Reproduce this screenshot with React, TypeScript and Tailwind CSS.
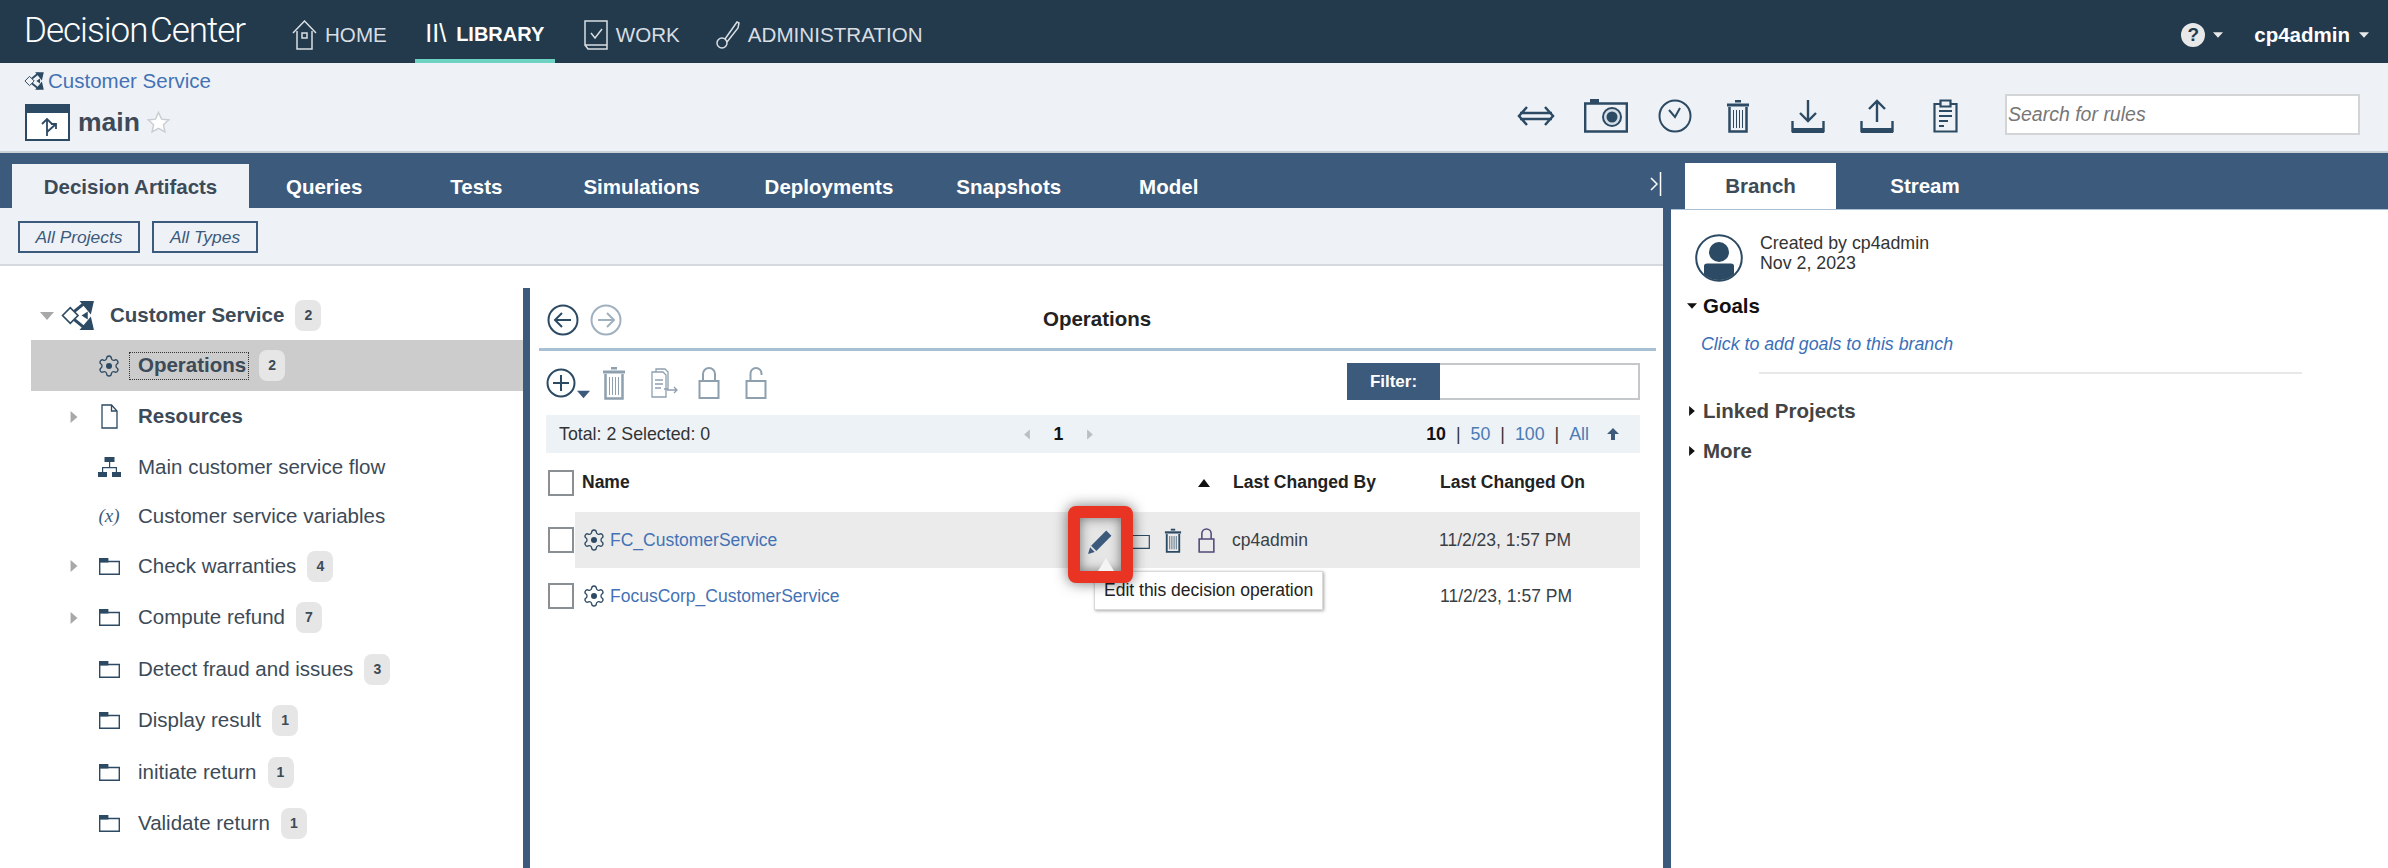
const NAVY = '#2c4a63';

function Gear({ className = 'w-[24px] h-[24px]' }: { className?: string }) {
  return (
    <svg viewBox="0 0 24 24" className={className} fill="none" stroke={NAVY} strokeWidth="1.3">
      <path d="M9.671 4.136a2.34 2.34 0 0 1 4.659 0 2.34 2.34 0 0 0 3.319 1.915 2.34 2.34 0 0 1 2.33 4.033 2.34 2.34 0 0 0 0 3.831 2.34 2.34 0 0 1-2.33 4.033 2.34 2.34 0 0 0-3.319 1.915 2.34 2.34 0 0 1-4.659 0 2.34 2.34 0 0 0-3.32-1.915 2.34 2.34 0 0 1-2.33-4.033 2.34 2.34 0 0 0 0-3.831A2.34 2.34 0 0 1 6.35 6.051a2.34 2.34 0 0 0 3.319-1.915" />
      <circle cx="12" cy="12" r="3" fill={NAVY} stroke="none" />
    </svg>
  );
}

function ProjectIcon({ className }: { className: string }) {
  return (
    <svg viewBox="0 0 34 32" className={className} fill="none" stroke={NAVY}>
      <path d="M1.500 16 9 8.500 16.500 16 9 23.500z" strokeWidth="1.6" />
      <path d="M13 12 24 3M13 20l11 9" strokeWidth="3" />
      <path d="M18 2h14l-3 13zM18 30h14l-3-13z" fill={NAVY} stroke="none" />
      <path d="M20 16l6-4v8z" fill={NAVY} stroke="none" />
    </svg>
  );
}

function Folder() {
  return (
    <svg viewBox="0 0 21 17" className="w-[21px] h-[17px]" fill="none" stroke={NAVY} strokeWidth="1.4">
      <path d="M.7 3.500h19.600v12.800H.7z" />
      <path d="M.7 .7h8v3H.7z" fill={NAVY} />
    </svg>
  );
}

function Trash({ className, color = NAVY }: { className: string; color?: string }) {
  return (
    <svg viewBox="0 0 24 34" className={className} fill="none" stroke={color}>
      <path d="M9 1h6v2.500H9z" fill={color} stroke="none" />
      <path d="M1 4.500h22v3H1z" fill={color} stroke="none" />
      <path d="M3.500 8v24.500h17V8" strokeWidth="2.500" />
      <path d="M7.500 11v18M10.500 11v18M13.500 11v18M16.500 11v18" strokeWidth="1" />
    </svg>
  );
}

function Lock({ className, color, open = false }: { className: string; color: string; open?: boolean }) {
  return (
    <svg viewBox="0 0 22 32" className={className} fill="none" stroke={color} strokeWidth="2">
      <path d="M1.500 14h19v17h-19z" />
      <path d={open ? 'M5.500 14V6.500a5.500 5.500 0 0 1 11 0V8' : 'M5 14V7a6 6 0 0 1 12 0v7'} />
    </svg>
  );
}

function Check({ className = '' }: { className?: string }) {
  return <span className={`block w-[26px] h-[26px] border-2 border-[#8a8f94] bg-white shrink-0 ${className}`} />;
}

function Count({ n }: { n: number }) {
  return (
    <span className="ml-[11px] flex items-center justify-center w-[26px] h-[31px] rounded-[8px] bg-[#e6e6e6] text-[14px] font-bold text-[#3d4a57]">
      {n}
    </span>
  );
}

function Caret({ open = false, color = '#a8a8a8', size = 'w-[14px] h-[14px]' }: { open?: boolean; color?: string; size?: string }) {
  return (
    <svg viewBox="0 0 14 14" className={size} fill={color}>
      <path d={open ? 'M0 3h14L7 11z' : 'M3 0l8 7-8 7z'} />
    </svg>
  );
}

function Tree() {
  const rows = [
    { h: 'h-[51px]', label: 'Operations', n: 2, selected: true, bold: true, icon: <Gear /> },
    { h: 'h-[51px]', label: 'Resources', bold: true, caret: true, icon: (
      <svg viewBox="0 0 17 25" className="w-[17px] h-[25px]" fill="none" stroke={NAVY} strokeWidth="1.3">
        <path d="M1 1h9.500l5.500 6v17H1zM10.500 1v6H16" />
      </svg>
    ) },
    { h: 'h-[50px]', label: 'Main customer service flow', icon: (
      <svg viewBox="0 0 23 20" className="w-[23px] h-[20px]" fill={NAVY}>
        <path d="M6.500 0h10v5h-10zM0 15h9v5H0zM14 15h9v5h-9z" />
        <path d="M11 5h1.200v5H19v5h-1.200v-3.800H5.200V15H4v-5h7z" />
      </svg>
    ) },
    { h: 'h-[48px]', label: 'Customer service variables', icon: (
      <span className="w-[24px] text-center font-['Liberation_Serif',serif] italic text-[19px] text-[#3b5a7c] whitespace-nowrap">(x)</span>
    ) },
    { h: 'h-[52px]', label: 'Check warranties', n: 4, caret: true, icon: <Folder /> },
    { h: 'h-[51px]', label: 'Compute refund', n: 7, caret: true, icon: <Folder /> },
    { h: 'h-[52px]', label: 'Detect fraud and issues', n: 3, icon: <Folder /> },
    { h: 'h-[51px]', label: 'Display result', n: 1, icon: <Folder /> },
    { h: 'h-[52px]', label: 'initiate return', n: 1, icon: <Folder /> },
    { h: 'h-[51px]', label: 'Validate return', n: 1, icon: <Folder /> },
  ];
  return (
    <div className="w-[523px] shrink-0 pt-[23px] pl-[31px] text-[20.500px] text-[#3d4a57]">
      <div className="h-[51px] flex items-center pt-[2px]">
        <span className="w-[9px]" />
        <Caret open size="w-[14px] h-[14px]" />
        <ProjectIcon className="w-[35px] h-[33px] ml-[7px]" />
        <span className="ml-[14px] font-bold">Customer Service</span>
        <Count n={2} />
      </div>
      {rows.map((r) => (
        <div key={r.label} className={`${r.h} flex items-center ${r.selected ? 'bg-[#cccccc]' : ''}`}>
          <span className="w-[66px] pl-[37px] shrink-0">{r.caret && <Caret size="w-[12px] h-[14px]" />}</span>
          <span className="w-[24px] flex justify-center shrink-0">{r.icon}</span>
          {r.selected ? (
            <span className="ml-[9px] pl-[8px] pr-[2px] h-[26px] flex items-center font-bold outline-1 outline-dotted outline-[#333]">{r.label}</span>
          ) : (
            <span className={`ml-[17px] ${r.bold ? 'font-bold' : ''}`}>{r.label}</span>
          )}
          {r.n !== undefined && <Count n={r.n} />}
        </div>
      ))}
    </div>
  );
}

function MiddlePanel() {
  const date = '11/2/23, 1:57 PM';
  return (
    <div className="flex-1 pl-[9px] pr-[7px] pt-[16px] text-[#222]">
      <div className="relative h-[44px] flex items-start gap-[11px] pl-[8px] border-b-[3px] border-[#a9bfd3] box-content">
        <svg viewBox="0 0 32 32" className="w-[32px] h-[32px]" fill="none" stroke={NAVY} strokeWidth="2">
          <circle cx="16" cy="16" r="14.500" />
          <path d="M24 16H8M15 9l-7 7 7 7" />
        </svg>
        <svg viewBox="0 0 32 32" className="w-[32px] h-[32px]" fill="none" stroke="#9fb0bf" strokeWidth="2">
          <circle cx="16" cy="16" r="14.500" />
          <path d="M8 16h16M17 9l7 7-7 7" />
        </svg>
        <span className="flex-1 pl-[410px] text-[20.500px] font-bold">Operations</span>
      </div>

      <div className="h-[64px] flex items-center pl-[7px] pr-[16px]">
        <svg viewBox="0 0 30 30" className="w-[30px] h-[30px]" fill="none" stroke={NAVY} strokeWidth="2">
          <circle cx="15" cy="15" r="13.500" />
          <path d="M15 7v16M7 15h16" />
        </svg>
        <span className="mt-[22px] ml-[1px]"><Caret open color="#3b5a7c" size="w-[13px] h-[13px]" /></span>
        <Trash className="w-[26px] h-[34px] ml-[11px]" color="#8ea0ae" />
        <svg viewBox="0 0 28 30" className="w-[28px] h-[30px] ml-[24px]" fill="none" stroke="#8ea0ae" strokeWidth="1.300">
          <path d="M5 4V1h9l3 3v17h-4M1 4h11l3 3v22H1z" />
          <path d="M4 12h8M4 16h8M4 20h6M16 22h10M23 19l3 3-3 3" />
        </svg>
        <Lock className="w-[22px] h-[32px] ml-[19px]" color="#8ea0ae" />
        <Lock className="w-[22px] h-[32px] ml-[25px]" color="#8ea0ae" open />
        <div className="ml-auto flex h-[37px] mb-[3px]">
          <span className="w-[93px] bg-[#3b5a7c] text-white font-bold text-[17px] flex items-center justify-center">Filter:</span>
          <span className="w-[200px] border-2 border-[#c4c8ca] border-l-0 bg-white" />
        </div>
      </div>

      <div className="ml-[7px] mr-[16px] h-[38px] bg-[#edf2f7] flex items-center pl-[13px] pr-[21px] text-[17.800px] text-[#333]">
        <span className="w-[463px]">Total: 2 Selected: 0</span>
        <Caret color="#b9bfc5" size="w-[10px] h-[13px] rotate-180" />
        <span className="w-[53px] text-center font-bold text-[#111]">1</span>
        <Caret color="#b9bfc5" size="w-[10px] h-[13px]" />
        <span className="ml-auto font-bold text-[#111]">10</span>
        <span className="mx-[10px]">|</span>
        <span className="text-[#4b7bb5]">50</span>
        <span className="mx-[10px]">|</span>
        <span className="text-[#4b7bb5]">100</span>
        <span className="mx-[10px]">|</span>
        <span className="text-[#4b7bb5]">All</span>
        <svg viewBox="0 0 12 12" className="w-[12px] h-[12px] ml-[18px]" fill="#3b5a7c">
          <path d="M6 0l6 6H8v6H4V6H0z" />
        </svg>
      </div>

      <div className="ml-[9px] mr-[16px] h-[59px] flex items-center text-[17.500px] font-bold text-[#222]">
        <Check />
        <span className="ml-[8px] w-[616px]">Name</span>
        <svg viewBox="0 0 12 8" className="w-[12px] h-[8px] fill-[#111]"><path d="M6 0l6 8H0z" /></svg>
        <span className="ml-[23px] w-[207px]">Last Changed By</span>
        <span>Last Changed On</span>
      </div>

      <div className="ml-[9px] mr-[16px] h-[56px] flex items-center text-[17.500px] relative">
        <Check />
        <div className="flex-1 h-full ml-[1px] bg-[#ebebeb] flex items-center pl-[7px]">
          <Gear />
          <span className="ml-[4px] w-[519px] text-[#4472b4]">FC_CustomerService</span>
          <svg viewBox="0 0 21 17" className="w-[21px] h-[17px]" fill="none" stroke={NAVY} strokeWidth="1.200">
            <path d="M.7 3.500h19.600v12.800H.7z" />
          </svg>
          <Trash className="w-[18px] h-[25px] ml-[14px]" />
          <Lock className="w-[17px] h-[25px] ml-[16px]" color="#4d4a78" />
          <span className="ml-[17px] w-[207px] text-[#3a3f45]">cp4admin</span>
          <span className="text-[#3a3f45]">{date}</span>
        </div>

        {/* tooltip and callout drawn over the row */}
        <div className="absolute left-[546px] top-[59px] w-[229px] h-[39px] bg-white border border-[#d9d9d9] shadow-[1px_1px_3px_rgba(0,0,0,0.35)] pl-[9px] flex items-center text-[17.500px] text-[#222] whitespace-nowrap">
          Edit this decision operation
        </div>
        <div className="absolute left-[520px] top-[-6px] w-[65px] h-[77px] rounded-[8px] border-[12px] border-[#e93323] bg-[#e6e6e6] shadow-[0_0_14px_rgba(0,0,0,0.55),inset_0_0_12px_rgba(0,0,0,0.5)] flex items-center justify-center pb-[6px]">
          <svg viewBox="0 0 24 24" className="w-[25px] h-[25px]" fill="#3b5a7c">
            <path d="M17.500 1.500l5 5L8 21l-5-5zM2 17.500l4.500 4.500L0 24z" />
          </svg>
          <svg viewBox="0 0 16 13" className="absolute left-[18px] bottom-0 w-[16px] h-[13px]" fill="#f4f4f4">
            <path d="M8 0l8 13H0z" />
          </svg>
        </div>
      </div>

      <div className="ml-[9px] mr-[16px] h-[56px] flex items-center text-[17.500px]">
        <Check />
        <div className="flex-1 h-full ml-[1px] flex items-center pl-[7px]">
          <Gear />
          <span className="ml-[4px] w-[830px] text-[#4472b4]">FocusCorp_CustomerService</span>
          <span className="text-[#3a3f45]">{date}</span>
        </div>
      </div>
    </div>
  );
}

function RightPanel() {
  return (
    <div className="flex-1 border-l-[8px] border-[#3b5a7c] bg-white">
      <div className="h-[57px] bg-[#3b5a7c] flex items-end pl-[14px] text-[20.500px] font-bold border-b border-[#a9bfd3]">
        <span className="w-[151px] h-[46px] bg-white text-[#3d4a57] flex items-center justify-center">Branch</span>
        <span className="w-[178px] h-[46px] text-white flex items-center justify-center">Stream</span>
      </div>
      <div className="pt-[24px] pl-[24px]">
        <div className="flex">
          <svg viewBox="0 0 48 48" className="w-[48px] h-[48px]" fill="none">
            <circle cx="24" cy="24" r="22.800" stroke={NAVY} strokeWidth="2" />
            <circle cx="24" cy="18" r="10" fill={NAVY} />
            <path d="M9 32q0-2.500 3-2.500h24q3 0 3 2.500v8.500Q32 46 24 46T9 40.500z" fill={NAVY} />
          </svg>
          <div className="ml-[17px] -mt-[1px] text-[17.800px] leading-[20px] text-[#333]">
            <div>Created by cp4admin</div>
            <div>Nov 2, 2023</div>
          </div>
        </div>
        <div className="-ml-[8px] mt-[12px] flex items-center h-[24px] text-[20.500px] font-bold text-[#111]">
          <Caret open color="#111" size="w-[10px] h-[10px]" />
          <span className="ml-[6px]">Goals</span>
        </div>
        <div className="ml-[6px] mt-[16px] text-[17.800px] italic text-[#3a6fb8] leading-[20px]">Click to add goals to this branch</div>
        <div className="ml-[64px] mt-[18px] w-[543px] h-[2px] bg-[#e8e8e8]" />
        <div className="-ml-[8px] mt-[25px] flex items-center h-[24px] text-[20.500px] font-bold text-[#444]">
          <Caret color="#111" size="w-[10px] h-[10px]" />
          <span className="ml-[6px]">Linked Projects</span>
        </div>
        <div className="-ml-[8px] mt-[16px] flex items-center h-[24px] text-[20.500px] font-bold text-[#444]">
          <Caret color="#111" size="w-[10px] h-[10px]" />
          <span className="ml-[6px]">More</span>
        </div>
      </div>
    </div>
  );
}

function ToolbarIcons() {
  return (
    <div className="flex items-center h-[40px] mt-[2px]">
      <svg viewBox="0 0 38 24" className="w-[38px] h-[24px]" fill="none" stroke={NAVY} strokeWidth="2.500">
        <path d="M10 3 2 12l8 9M28 3l8 9-8 9M3 9h32M3 15h32" />
      </svg>
      <svg viewBox="0 0 44 34" className="w-[44px] h-[34px] ml-[29px]" fill="none" stroke={NAVY}>
        <path d="M6 0h9v4H6z" fill={NAVY} stroke="none" />
        <path d="M1.200 4.500h41.600v28H1.200z" strokeWidth="2.400" />
        <circle cx="28" cy="18" r="9" strokeWidth="2" fill="#d5dee6" />
        <circle cx="28" cy="18" r="5.500" fill={NAVY} stroke="none" />
      </svg>
      <svg viewBox="0 0 34 34" className="w-[34px] h-[34px] ml-[30px]" fill="none" stroke={NAVY} strokeWidth="2">
        <circle cx="17" cy="17" r="15.500" />
        <path d="M11 11l6 7 5-9" />
      </svg>
      <Trash className="w-[24px] h-[34px] ml-[34px]" />
      <svg viewBox="0 0 34 34" className="w-[34px] h-[34px] ml-[41px]" fill="none" stroke={NAVY} strokeWidth="2.400">
        <path d="M17 1v21M9 14l8 8 8-8M1.500 22v10h31V22" />
        <path d="M1 29h32v5H1z" fill={NAVY} stroke="none" />
      </svg>
      <svg viewBox="0 0 34 34" className="w-[34px] h-[34px] ml-[35px]" fill="none" stroke={NAVY} strokeWidth="2.400">
        <path d="M17 23V2M9 10l8-8 8 8M1.500 22v10h31V22" />
        <path d="M1 29h32v5H1z" fill={NAVY} stroke="none" />
      </svg>
      <svg viewBox="0 0 25 34" className="w-[25px] h-[34px] ml-[39px]" fill="none" stroke={NAVY} strokeWidth="2.200">
        <path d="M7 5H1.500v27.500h22V5H18" />
        <path d="M7.500 1.500h10v6h-10z" />
        <path d="M6 12h13M6 17h13M6 22h9M6 27h5" />
      </svg>
    </div>
  );
}

export default function App() {
  return (
    <div className="w-[2388px] h-[868px] overflow-hidden bg-white font-['Liberation_Sans',Arial,sans-serif] flex flex-col">
      {/* Top navigation */}
      <header className="h-[63px] shrink-0 bg-[#233a4d] flex items-stretch pl-[24px] text-[#d8dee3] text-[20.600px]">
        <span className="flex items-center text-[35px] text-white font-['Roboto',sans-serif] font-light tracking-[-1px] [word-spacing:-5px] w-[268px]">Decision Center</span>
        <div className="flex items-center pt-[7px]">
          <svg viewBox="0 0 25 30" className="w-[25px] h-[30px]" fill="none" stroke="#d8dee3" strokeWidth="1.500">
            <path d="M1 13 12.500 1 24 13M5 11v18h15V11M10 13h5v5h-5z" />
          </svg>
          <span className="ml-[8px]">HOME</span>
        </div>
        <div className="ml-[28px] w-[140px] border-b-4 border-[#6cd2c2] flex items-center justify-center font-bold text-white text-[20px] pt-[9px]">
          <span className="mr-[10px] font-normal text-[25px]">II\</span>LIBRARY
        </div>
        <div className="flex items-center pt-[7px]">
          <svg viewBox="0 0 24 30" className="ml-[29px] w-[24px] h-[30px]" fill="none" stroke="#d8dee3" strokeWidth="1.500">
            <path d="M1 1h22v24H1zM1 25l3 4h19V25M7 13l4 5 7-9" />
          </svg>
          <span className="ml-[8px]">WORK</span>
          <svg viewBox="0 0 24 30" className="ml-[36px] w-[24px] h-[30px]" fill="none" stroke="#d8dee3" strokeWidth="1.500">
            <circle cx="6" cy="23" r="5" />
            <path d="M9 19 21 2l2 1-1 5-11 14" />
          </svg>
          <span className="ml-[8px]">ADMINISTRATION</span>
        </div>
        <div className="ml-auto flex items-center pr-[19px] pt-[7px]">
          <span className="w-[24px] h-[24px] rounded-full bg-[#e8e8e8] text-[#233a4d] font-bold text-[19px] flex items-center justify-center">?</span>
          <span className="ml-[8px]"><Caret open color="#e8e8e8" size="w-[10px] h-[10px]" /></span>
          <span className="ml-[31px] font-bold text-[20.500px] text-white">cp4admin</span>
          <span className="ml-[9px]"><Caret open color="#e8e8e8" size="w-[10px] h-[10px]" /></span>
        </div>
      </header>

      {/* Branch title and actions */}
      <div className="h-[90px] shrink-0 bg-[#eef2f7] border-b-2 border-[#c9d1d9] flex pl-[25px] pr-[28px]">
        <div className="pt-[9px]">
          <div className="flex items-center h-[18px] -ml-[1px]">
            <ProjectIcon className="w-[21px] h-[20px]" />
            <span className="ml-[3px] text-[20.500px] text-[#4472b4]">Customer Service</span>
          </div>
          <div className="flex items-center mt-[13px]">
            <svg viewBox="0 0 45 37" className="w-[45px] h-[37px]" fill="none" stroke={NAVY}>
              <path d="M1 1h43v35H1z" strokeWidth="2" fill="#fff" />
              <path d="M0 0h45v9H0z" fill={NAVY} stroke="none" />
              <path d="M22 32V15M17 20l5-5 5 5M22 28l9-8M26 20h5v5" strokeWidth="1.800" />
            </svg>
            <span className="ml-[8px] text-[26.500px] font-bold text-[#3d4a57]">main</span>
            <svg viewBox="0 0 24 24" className="ml-[7px] w-[23px] h-[23px]" fill="#fff" stroke="#c9cdd1" strokeWidth="1.500">
              <path d="M12 1.500l3.200 7 7.500.8-5.600 5 1.600 7.500L12 18l-6.700 3.800 1.600-7.500-5.600-5 7.500-.8z" />
            </svg>
          </div>
        </div>
        <div className="ml-auto flex items-start pt-[31px]">
          <ToolbarIcons />
          <div className="ml-[47px] w-[355px] h-[41px] border-2 border-[#d2d4d6] bg-white pl-[1px] flex items-center text-[19.500px] italic text-[#777]">Search for rules</div>
        </div>
      </div>

      <div className="flex-1 flex min-h-0">
        {/* Library */}
        <div className="w-[1663px] shrink-0 flex flex-col">
          <div className="h-[55px] shrink-0 bg-[#3b5a7c] flex items-end pl-[12px] text-[20.500px] font-bold text-white relative">
            <span className="w-[237px] h-[44px] bg-[#eef2f7] text-[#3d4a57] flex items-center justify-center pt-[2px]">Decision Artifacts</span>
            <span className="ml-[37px] h-[44px] flex items-center pt-[2px]">Queries</span>
            <span className="ml-[88px] h-[44px] flex items-center pt-[2px]">Tests</span>
            <span className="ml-[81px] h-[44px] flex items-center pt-[2px]">Simulations</span>
            <span className="ml-[65px] h-[44px] flex items-center pt-[2px]">Deployments</span>
            <span className="ml-[63px] h-[44px] flex items-center pt-[2px]">Snapshots</span>
            <span className="ml-[78px] h-[44px] flex items-center pt-[2px]">Model</span>
            <svg viewBox="0 0 12 24" className="absolute left-[1650px] top-[19px] w-[12px] h-[24px]" fill="none" stroke="#fff" strokeWidth="1.500">
              <path d="M1 6l6 6-6 6M10.500 0v24" />
            </svg>
          </div>
          <div className="h-[58px] shrink-0 bg-[#eef2f7] border-b-2 border-[#d5d9dd] flex items-center pl-[18px] gap-[12px] pt-[2px] text-[17.400px] italic text-[#3b5a7c]">
            <span className="w-[122px] h-[32px] border-2 border-[#3b5a7c] flex items-center justify-center">All Projects</span>
            <span className="w-[106px] h-[32px] border-2 border-[#3b5a7c] flex items-center justify-center">All Types</span>
          </div>
          <div className="flex-1 flex min-h-0">
            <Tree />
            <div className="flex-1 flex flex-col mt-[22px] border-l-[7px] border-[#3b5a7c] min-w-0">
              <MiddlePanel />
            </div>
          </div>
        </div>
        <RightPanel />
      </div>
    </div>
  );
}
